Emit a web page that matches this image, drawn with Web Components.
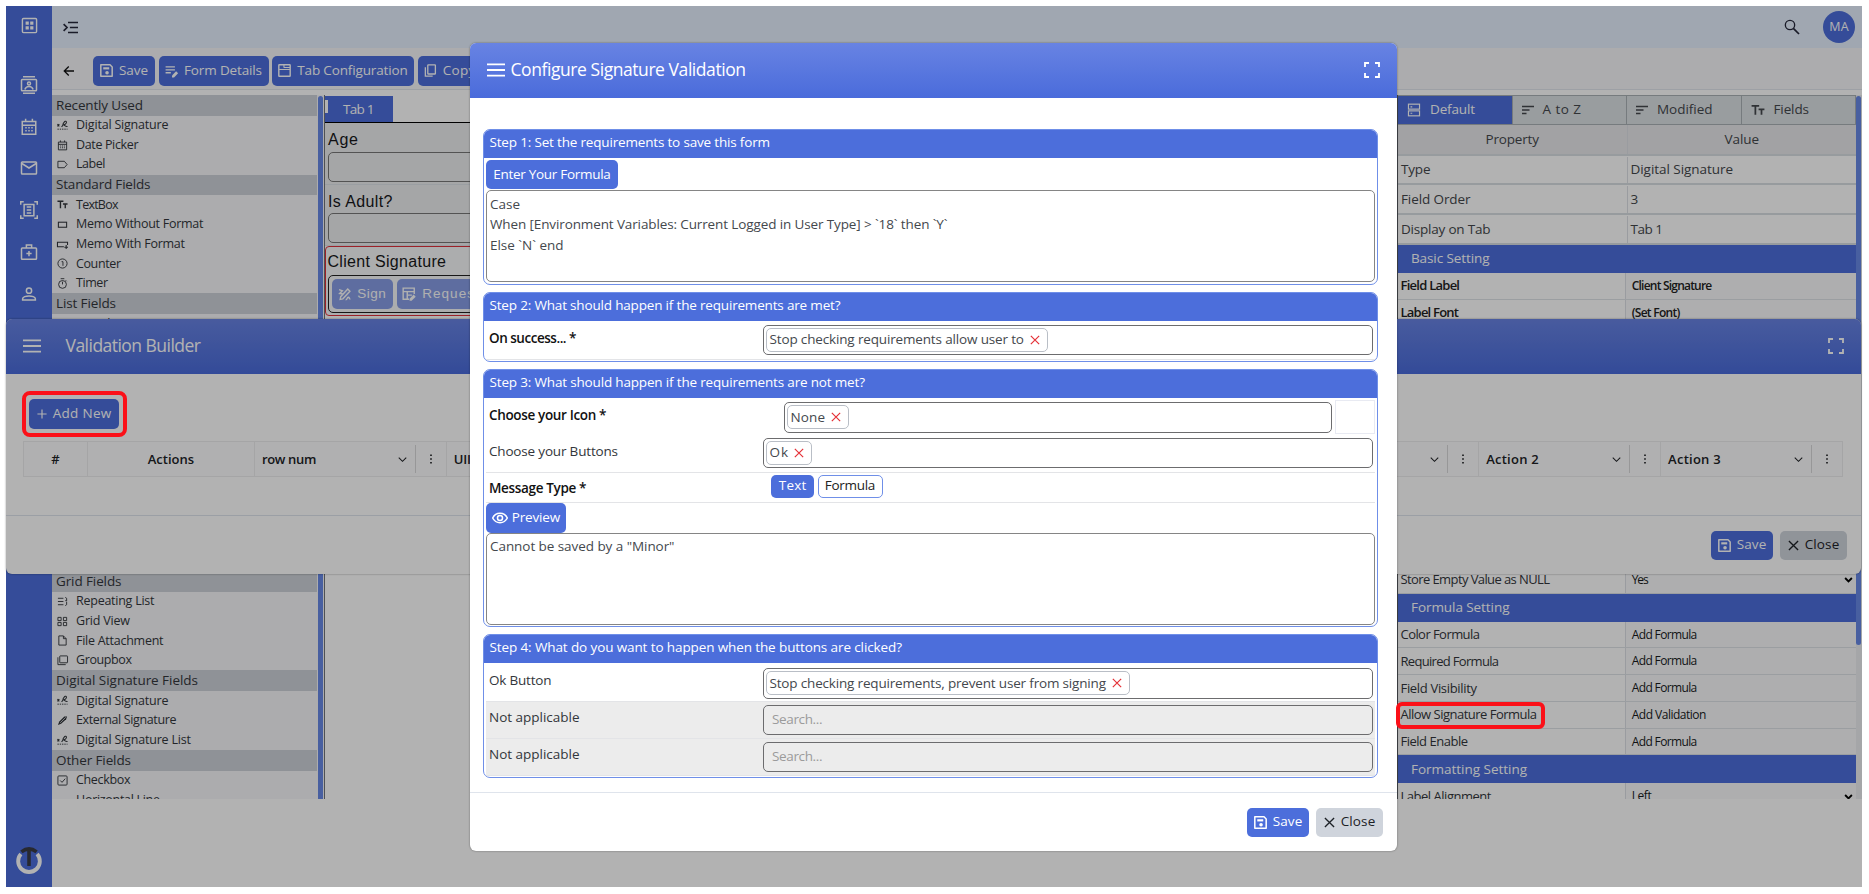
<!DOCTYPE html>
<html lang="en">
<head>
<meta charset="utf-8">
<title>Configure Signature Validation</title>
<style>
    html, body {
        margin: 0;
        height: 100%;
        overflow: hidden;
        background: #fff;
    }

    body {
        font-family: "Open Sans", "Noto Sans", sans-serif;
        font-size: 13.5px;
        line-height: 1;
        color: #33363b;
        --blue: #4c6edb;
    }

    /* dims the page and the first dialog */
    .backdrop {
        position: absolute;
        left: 6px;
        top: 6px;
        width: 1856px;
        height: 881px;
        background: rgba(0, 0, 0, .3);
    }

    #builder {
        position: absolute;
        left: 6px;
        top: 319px;
        width: 1855px;
        height: 255px;
    }

    #configure {
        position: absolute;
        left: 470px;
        top: 43px;
        width: 927px;
        height: 808px;
    }

    .ring {
        position: absolute;
        box-sizing: border-box;
        border: 4px solid #fb1018;
        border-radius: 8px;
    }
</style>
</head>
<body>
<app-shell></app-shell>
<dialog-window id="builder" gap="25">
    <fit-text slot="title" w="134">Validation Builder</fit-text>
    <builder-grid></builder-grid>
</dialog-window>
<div class="backdrop"></div>
<dialog-window id="configure" gap="6">
    <fit-text slot="title" w="234">Configure Signature Validation</fit-text>
    <signature-form></signature-form>
</dialog-window>
<div class="ring" style="left:22px;top:391px;width:105px;height:46px"></div>
<div class="ring" style="left:1396px;top:702px;width:149px;height:27px;border-radius:6px"></div>

<script>
const S = 'fill="none" stroke="currentColor" stroke-width="2"';
const icons = {
    dashboard: `<rect x="2" y="2" width="20" height="20" rx="1.500" ${S}/><path d="M6.500 6.500h4.500v4.500h-4.500zM13 6.500h4.500v4.500H13zM6.500 13h4.500v4.500h-4.500zM13 13h4.500v4.500H13z"/>`,
    contacts: `<path d="M4 0h16v2H4zM4 22h16v2H4z"/><rect x="2" y="4.500" width="20" height="15" rx="1" ${S}/><circle cx="12" cy="10" r="2" ${S}/><path d="M6.500 18c1-3 3-4 5.500-4s4.500 1 5.500 4" ${S}/>`,
    calendar: `<path d="M3 4.500h18v17H3zM3 9.500h18M7.500 1v3.500M16.500 1v3.500" ${S}/><path d="M7 12h2v2H7zM11 12h2v2h-2zM15 12h2v2h-2zM7 16h2v2H7zM11 16h2v2h-2zM15 16h2v2h-2z"/>`,
    mail: `<rect x="2" y="4" width="20" height="16" rx="1" ${S}/><path d="M2.500 6l9.500 6 9.500-6" ${S}/>`,
    scan: `<path d="M1 5V1h4M19 1h4v4M23 19v4h-4M5 23H1v-4M5.500 4.500h13v15h-13zM9 8h6M9 12h6M9 16h6" ${S}/>`,
    medical: `<rect x="2" y="6.500" width="20" height="15" rx="1" ${S}/><path d="M8.500 6.500v-4h7v4M12 10.500v7M8.500 14h7" ${S}/>`,
    person: `<circle cx="12" cy="7.500" r="3.500" ${S}/><path d="M3.500 20v-1.800c0-2.200 4.500-3.700 8.500-3.700s8.500 1.500 8.500 3.700V20z" ${S}/>`,
    logo: `<path d="M4.500 6.500a10 10 0 1 0 15 0" fill="none" stroke="#fff" stroke-width="3.600"/><path d="M5 4.500Q12-1 19 4.500M12 2v15.500" fill="none" stroke="#3a3b46" stroke-width="3.300"/>`,
    collapse: `<path d="M8 4h16M11 12h13M8 20h16M1 6.500l5.500 5.500L1 17.500" fill="none" stroke="currentColor" stroke-width="2.600"/>`,
    search: `<circle cx="9" cy="9" r="7" ${S}/><path d="M14 14l8.500 8.500" fill="none" stroke="currentColor" stroke-width="2.600"/>`,
    back: `<path d="M22 12H3M11.500 3L2.500 12l9 9" fill="none" stroke="currentColor" stroke-width="2.600"/>`,
    save: `<path d="M1.500 1.500h17l4 4v17h-21z" fill="none" stroke="currentColor" stroke-width="2.800" stroke-linejoin="round"/><path d="M6 6h11v4H6z"/><circle cx="13" cy="16" r="3.300"/>`,
    details: `<path d="M1 5h16M1 10h16M1 15h9" fill="none" stroke="currentColor" stroke-width="2.400"/><path d="M12 19.500l7-7 3.500 3.500-7 7H12z"/>`,
    tabs: `<rect x="1.500" y="1.500" width="21" height="21" rx="1" fill="none" stroke="currentColor" stroke-width="2.600"/><path d="M2 10h20M11 2v5M11 6.500h11" ${S}/>`,
    copy: `<rect x="7" y="1.500" width="14" height="17" rx="1" fill="none" stroke="currentColor" stroke-width="2.400"/><path d="M2.500 6v16.500H16" fill="none" stroke="currentColor" stroke-width="2.400"/>`,
    plus: `<path d="M12 1v22M1 12h22" fill="none" stroke="currentColor" stroke-width="2.800"/>`,
    close: `<path d="M2 2l20 20M22 2L2 22" fill="none" stroke="currentColor" stroke-width="2.900"/>`,
    eye: `<path d="M1 12c2.500-5 6.500-7 11-7s8.500 2 11 7c-2.500 5-6.500 7-11 7S3.500 17 1 12z" fill="none" stroke="currentColor" stroke-width="2.300"/><circle cx="12" cy="12" r="3.800" fill="none" stroke="currentColor" stroke-width="2.300"/>`,
    expand: `<path d="M1.500 7.500v-6h6M16.500 1.500h6v6M22.500 16.500v6h-6M7.500 22.500h-6v-6" fill="none" stroke="currentColor" stroke-width="2.800"/>`,
    menu: `<path d="M0 4.500h24M0 12h24M0 19.500h24" fill="none" stroke="currentColor" stroke-width="2.600"/>`,
    server: `<rect x="2.500" y="2" width="19" height="8.500" ${S}/><rect x="2.500" y="13.500" width="19" height="8.500" ${S}/><path d="M6 6.500h3M6 17.500h3" ${S}/>`,
    sort: `<path d="M0 5h24M0 12h15M0 19h9" fill="none" stroke="currentColor" stroke-width="2.600"/>`,
    text: `<path d="M1 5h13M7.500 5v15M13 11h10M18 11v9" fill="none" stroke="currentColor" stroke-width="3"/>`,
    sign: `<path d="M1 9l4 5M1 14l4-5M10 15c2-3 3-2 3-5s5-9 7-7-1 7-4 7 3 5 7 4" fill="none" stroke="currentColor" stroke-width="2.300"/><path d="M1 20h3M6 20h3M11 20h3M16 20h3M21 20h2" ${S}/>`,
    tag: `<path d="M2 5h14l6 7-6 7H2z" ${S}/>`,
    box: `<rect x="3" y="7" width="18" height="11" fill="none" stroke="currentColor" stroke-width="2.300"/>`,
    boxplus: `<path d="M15 17H1V7h22v6M20 13v9M16 18h8" fill="none" stroke="currentColor" stroke-width="2.300"/>`,
    one: `<circle cx="12" cy="12" r="10" ${S}/><path d="M10 8h3v9" ${S}/>`,
    timer: `<circle cx="12" cy="14" r="8.500" ${S}/><path d="M8 1.500h8M12 8v6M19 5l2 2" ${S}/>`,
    list: `<path d="M2 5h12M2 12h12M2 19h12M18 3l3 2v6l-3-1M21 13v6l-3 2" ${S}/>`,
    grid: `<path d="M2 3h7v7H2zM14 3h7v7h-7zM2 14h7v7H2zM14 14h7v7h-7z" ${S}/>`,
    file: `<path d="M4 2h10l6 6v14H4zM14 2v6h6" ${S}/>`,
    group: `<rect x="6" y="2" width="17" height="15" rx="1" ${S}/><path d="M2 5v16h17" ${S}/>`,
    pen: `<path d="M2 22l3-8L16 3h6l-2 6L9 19z"/><path d="M7 17L19 5" stroke="#f6f7fa" stroke-width="1.500"/>`,
    check: `<rect x="2" y="2" width="20" height="20" rx="2" ${S}/><path d="M7 12l4 4 7-8" ${S}/>`,
    dash: `<path d="M2 12h20" ${S}/>`,
    draw: `<path d="M2 3l6 2-5 5 6 1M4 21l1-5L18 2l4 4L9 20zM14 22c4 0 2-5 5-5s1 4 4 3" fill="none" stroke="currentColor" stroke-width="2.600"/>`,
    request: `<path d="M12 21H2V2h19v10M2 8h19M9 8v12M9 14h8" fill="none" stroke="currentColor" stroke-width="2.400"/><path d="M13 20l7-7 3.500 3.500-7 7H13z"/>`,
    chevron: `<path d="M2 7l10 10L22 7" fill="none" stroke="currentColor" stroke-width="2.800"/>`,
    select: `<path d="M3 8l9 9 9-9" fill="none" stroke="currentColor" stroke-width="5"/>`,
    dots: `<path d="M10 1h4v4h-4zM10 10h4v4h-4zM10 19h4v4h-4z"/>`
};

const icon = (name, size = 16) => `<ui-icon name="${name}" size="${size}"></ui-icon>`;
const t = (text, w) => `<fit-text w="${w}">${text}</fit-text>`;

// small helper: an element whose shadow root is filled once
function define(name, render) {
    customElements.define(name, class extends HTMLElement {
        constructor() {
            super();
            this.attachShadow({mode: 'open'});
            this.shadowRoot.innerHTML = render(this);
        }
    });
}

define('top-bar', () => `
<style>
    :host {
        display: flex;
        align-items: center;
        height: 42px;
        box-sizing: border-box;
        padding: 0 7px 0 11px;
        background: #e5effe;
        color: #26283a;
    }
    .avatar {
        width: 32px;
        height: 32px;
        border-radius: 50%;
        margin-left: 23px;
        display: flex;
        align-items: center;
        justify-content: center;
        background: var(--blue);
        color: #fff;
        font-size: 12.5px;
    }
    .search { margin-left: auto; display: flex; }
</style>
${icon('collapse', 15)}
<span class="search">${icon('search', 16)}</span>
<span class="avatar">${t('MA', 18)}</span>`);

define('side-nav', () => `
<style>
    :host {
        display: flex;
        flex-direction: column;
        align-items: center;
        width: 46px;
        background: var(--blue);
        color: #fff;
    }
    ui-icon { margin-top: 23.800px; }
    ui-icon:first-of-type { margin: 11px 0 18px; }
    ui-icon:last-of-type { margin: auto 0 14px; }
</style>
${icon('dashboard', 17)}${['contacts', 'calendar', 'mail', 'scan', 'medical', 'person'].map(n => icon(n, 18)).join('')}${icon('logo', 26)}`);

define('ui-button', el => `
<style>
    :host {
        display: flex;
        align-items: center;
        justify-content: center;
        gap: 6px;
        height: 30px;
        flex: none;
        border-radius: 5px;
        box-sizing: border-box;
        background: var(--blue);
        color: #fff;
        font-size: 13.5px;
        font-weight: ${el.hasAttribute('strong') ? 500 : 400};
    }
    :host([plain]) { background: #cfd4dc; color: #1d2126; }
</style>
${el.getAttribute('icon') ? icon(el.getAttribute('icon'), el.getAttribute('size') || 13) : ''}<slot></slot>`);

define('tool-bar', () => `
<style>
    :host {
        display: flex;
        gap: 3.500px;
        height: 42px;
        box-sizing: border-box;
        padding: 7.500px 0 0 11px;
        background: #f6f7fa;
        border-bottom: 1px solid #e1e5ec;
    }
    .back { width: 26.500px; height: 30px; display: flex; align-items: center; color: #111; }
</style>
<span class="back">${icon('back', 12)}</span>
<ui-button icon="save" style="width:62px">${t('Save', 27.5)}</ui-button>
<ui-button icon="details" size="14" style="width:110px;gap:5px">${t('Form Details', 76.5)}</ui-button>
<ui-button icon="tabs" style="width:142px">${t('Tab Configuration', 109)}</ui-button>
<ui-button icon="copy" size="13" style="width:64px">${t('Copy', 31)}</ui-button>`);

const groups = [
    ['Recently Used', 85.5, [['sign', 'Digital Signature', 91], ['calendar', 'Date Picker', 61], ['tag', 'Label', 28]]],
    ['Standard Fields', 93, [['text', 'TextBox', 41], ['box', 'Memo Without Format', 126], ['boxplus', 'Memo With Format', 107.5], ['one', 'Counter', 43.5], ['timer', 'Timer', 30.5]]],
    ['List Fields', 58.5, [['list', 'Dropdown', 56]], 237.5],
    ['Grid Fields', 64, [['list', 'Repeating List', 77], ['grid', 'Grid View', 52.5], ['file', 'File Attachment', 86], ['group', 'Groupbox', 54.5]]],
    ['Digital Signature Fields', 140.5, [['sign', 'Digital Signature', 91], ['pen', 'External Signature', 99], ['sign', 'Digital Signature List', 113.5]]],
    ['Other Fields', 73.5, [['check', 'Checkbox', 53], ['dash', 'Horizontal Line', 82.5]]]
];

define('field-list', () => `
<style>
    :host {
        display: flex;
        width: 273px;
        height: 704px;
        overflow: hidden;
        background: #f6f7fa;
        box-sizing: border-box;
        border-right: 1.500px solid #70737a;
    }
    .list { width: 265px; }
    .head {
        height: 20.600px;
        padding-left: 4px;
        display: flex;
        align-items: center;
        background: #cdd1d8;
        font-size: 13.5px;
    }
    .item {
        height: 19.670px;
        padding-left: 5px;
        display: flex;
        align-items: center;
        gap: 8px;
        font-size: 12.5px;
    }
    .bar { width: 5px; margin: 1px auto 0 auto; border-radius: 3px 3px 0 0; background: #6788e6; }
</style>
<div class="list">${groups.map(([name, w, items, rest]) => `
    <div class="head">${t(name, w)}</div>
    ${items.map(i => `<div class="item">${icon(i[0], 11)}${t(i[1], i[2])}</div>`).join('')}
    ${rest ? `<div style="height:${rest}px"></div>` : ''}`).join('')}
</div>
<div class="bar"></div>`);

define('form-canvas', () => `
<style>
    :host {
        display: block;
        flex: 1;
        font-family: "Liberation Sans", Arial, sans-serif;
        font-size: 16px;
        color: #17181a;
    }
    .tabs { height: 27px; border-bottom: 1.500px solid #000; display: flex; }
    .tab {
        width: 68px;
        height: 26px;
        margin-top: 1px;
        background: var(--blue);
        color: #fff;
        display: flex;
        align-items: center;
        font: 13.5px "Open Sans", sans-serif;
    }
    .tab i { width: 3px; height: 13px; background: #fff; align-self: flex-start; margin: 4px 15px 0 0; }
    .field { height: 61.500px; box-sizing: border-box; padding: 9px 3px 0; background: #edeef0; border-bottom: 1px solid #dde2e8; }
    .input { height: 28px; border: 1px solid #777; border-radius: 5px; margin-top: 3.500px; }
    .signed { height: 70px; box-sizing: border-box; border: 1.500px solid #e0303a; background: #f7f8f9; padding: 7px 1.500px 0; border-radius: 4px; }
    .signed .input { border-color: #222; margin-top: 5px; display: flex; gap: 4px; padding: 3px; box-sizing: border-box; height: 38px; }
    ui-button { opacity: .65; font-family: "Liberation Sans", sans-serif; }
</style>
<div class="tabs"><div class="tab"><i></i>${t('Tab 1', 30)}</div></div>
<div class="field">${t('Age', 28.5)}<div class="input"></div></div>
<div class="field">${t('Is Adult?', 63)}<div class="input"></div></div>
<div class="signed">${t('Client Signature', 117)}
    <div class="input">
        <ui-button icon="draw" style="width:61px">${t('Sign', 27)}</ui-button>
        <ui-button icon="request" size="14" style="width:88px">${t('Request', 55)}</ui-button>
    </div>
</div>`);

const formula = (name, w) => [name, w, 'Add Formula', 64];
define('property-panel', () => {
    const tall = (a, aw, b, bw) => `<div class="row tall"><span>${t(a, aw)}</span><span>${t(b, bw)}</span></div>`;
    const row = ([a, aw, b, bw], cls = '') => `<div class="row ${cls}"><span>${t(a, aw)}</span><span>${t(b, bw)}${cls.includes('pick') ? icon('select', 9) : ''}</span></div>`;
    return `
<style>
    :host {
        display: flex;
        width: 465px;
        height: 704px;
        box-sizing: border-box;
        border-left: 1.500px solid #5c6067;
        overflow: hidden;
        background: #fff;
    }
    .main { width: 458px; }
    .tabs { display: flex; height: 30px; box-sizing: border-box; border: solid #aab0b5; border-width: 1px 0; }
    .tab {
        flex: 1;
        display: flex;
        align-items: center;
        gap: 9px;
        padding-left: 9px;
        background: #dce1e4;
        border-right: 1px solid #aab0b5;
        color: #44484d;
    }
    .tab.on { background: var(--blue); color: #fff; }
    .row { display: flex; height: 26.750px; box-sizing: border-box; border-bottom: 1px solid #dfe2e7; }
    .row span { flex: 1; display: flex; align-items: center; padding-left: 2.500px; font-size: 13px; }
    .row span + span { border-left: 1px solid #dde0e5; padding-left: 6px; font-size: 12px; color: #181a1d; background: #f9fafb; }
    .tall { height: 29.800px; border-bottom: 2px solid #d9dee3; }
    .tall span, .tall span + span { padding-left: 3px; font-size: 13.5px; color: #44474b; background: none; }
    .tall:not(.title) { padding-top: 1px; }
    .title { background: #e8e9eb; height: 30.500px; }
    .title span, .title span + span { justify-content: center; padding: 0; }
    .strong span, .strong span + span { font-weight: 600; color: #222; }
    .pick ui-icon { margin: 0 3px 0 auto; color: #000; }
    .band {
        height: 28px;
        display: flex;
        align-items: center;
        padding-left: 13px;
        background: var(--blue);
        color: #fff;
        font-size: 13.5px;
        font-weight: 500;
    }
    .bar { width: 6px; background: #eceef1; }
    .bar i { display: block; height: 549px; border-radius: 3px; background: #6788e6; width: 5px; margin-top: 1px; }
</style>
<div class="main">
    <div class="tabs">
        <div class="tab on">${icon('server', 14)}${t('Default', 43.5)}</div>
        <div class="tab">${icon('sort', 12)}${t('A to Z', 37)}</div>
        <div class="tab">${icon('sort', 12)}${t('Modified', 54)}</div>
        <div class="tab">${icon('text', 14)}${t('Fields', 34)}</div>
    </div>
    <div class="row tall title"><span>${t('Property', 52)}</span><span>${t('Value', 33)}</span></div>
    ${tall('Type', 28, 'Digital Signature', 101)}
    ${tall('Field Order', 68, '3', 6)}
    ${tall('Display on Tab', 88, 'Tab 1', 31)}
    <div class="band">${t('Basic Setting', 77)}</div>
    ${row(['Field Label', 58, 'Client Signature', 79], 'strong')}
    ${row(['Label Font', 57, '(Set Font)', 47], 'strong')}
    <div style="height:240.500px"></div>
    ${row(['Store Empty Value as NULL', 148, 'Yes', 15.5], 'pick')}
    <div class="band">${t('Formula Setting', 97)}</div>
    ${row(formula('Color Formula', 78))}
    ${row(formula('Required Formula', 97))}
    ${row(formula('Field Visibility', 75))}
    ${row(['Allow Signature Formula', 135, 'Add Validation', 73])}
    ${row(formula('Field Enable', 66))}
    <div class="band">${t('Formatting Setting', 114.5)}</div>
    ${row(['Label Alignment', 89.5, 'Left', 18.5], 'pick')}
</div>
<div class="bar"><i></i></div>`;
});

define('app-shell', () => `
<style>
    :host {
        display: flex;
        width: 1856px;
        height: 881px;
        margin: 6px;
        overflow: hidden;
        background: #fff;
    }
    .page { flex: 1; }
    .work { display: flex; padding-top: 5px; height: 704px; }
</style>
<side-nav></side-nav>
<div class="page">
    <top-bar></top-bar>
    <tool-bar></tool-bar>
    <div class="work"><field-list></field-list><form-canvas></form-canvas><property-panel></property-panel></div>
</div>`);

define('dialog-window', el => `
<style>
    :host {
        display: flex;
        flex-direction: column;
        box-sizing: border-box;
        background: #fff;
        border-radius: 6px;
        overflow: hidden;
        box-shadow: 0 0 2px rgba(0, 0, 0, .45);
    }
    header {
        flex: none;
        height: 55px;
        display: flex;
        align-items: center;
        gap: ${el.getAttribute('gap')}px;
        padding: 0 17px 1px 16.500px;
        box-sizing: border-box;
        background: linear-gradient(#6883e3, #5675de 60%, #4a6bdb);
        color: #fff;
        font-size: 17.5px;
    }
    header .full { margin-left: auto; display: flex; }
    main { flex: 1; min-height: 0; }
    footer {
        flex: none;
        height: 59px;
        box-sizing: border-box;
        border-top: 1px solid #dfe4ec;
        padding: 14.500px 14px;
        display: flex;
        justify-content: flex-end;
        gap: 7px;
    }
    ui-button { height: 29px; }
</style>
<header>${icon('menu', 18)}<slot name="title"></slot><span class="full">${icon('expand', 16)}</span></header>
<main><slot></slot></main>
<footer>
    <ui-button icon="save" strong style="width:62px">${t('Save', 28)}</ui-button>
    <ui-button icon="close" plain size="11" style="width:67px">${t('Close', 33)}</ui-button>
</footer>`);

define('grid-column', el => `
<style>
    :host {
        display: flex;
        align-items: center;
        box-sizing: border-box;
        padding-left: 7px;
        border-right: 1px solid #ececee;
        font-weight: 600;
        font-size: 13px;
        color: #202226;
    }
    .menu { margin-left: auto; display: flex; align-items: center; }
    .menu ui-icon { margin-right: 8px; }
    .menu span { height: 28px; border-left: 1px solid #d8d8da; padding-left: 10px; display: flex; align-items: center; }
    .menu span ui-icon { margin-right: 10px; }
    :host([center]) { justify-content: center; padding: 0; }
</style>
<slot></slot>
${el.hasAttribute('center') ? '' : `<div class="menu">${icon('chevron', 9)}<span>${icon('dots', 10)}</span></div>`}`);

define('builder-grid', () => `
<style>
    :host { display: block; padding: 25px 18px 0 17px; }
    ui-button { width: 90px; margin-left: 6px; }
    .head { display: flex; height: 36px; box-sizing: border-box; margin-top: 12px; border: 1px solid #ececee; border-right: 0; background: #fdfdfe; }
</style>
<ui-button icon="plus" size="10">${t('Add New', 57)}</ui-button>
<div class="head">
    <grid-column center style="width:64px">${t('#', 7)}</grid-column>
    <grid-column center style="width:167px">${t('Actions', 45)}</grid-column>
    <grid-column style="width:192px">${t('row num', 53)}</grid-column>
    <grid-column style="width:851px">${t('UIID', 25)}</grid-column>
    <grid-column style="width:182px">${t('Action 1', 51)}</grid-column>
    <grid-column style="width:182px">${t('Action 2', 51)}</grid-column>
    <grid-column style="width:182px">${t('Action 3', 51)}</grid-column>
</div>`);

define('step-card', () => `
<style>
    :host {
        display: block;
        box-sizing: border-box;
        border: 1px solid #6f8fe8;
        border-radius: 7px;
        overflow: hidden;
    }
    header {
        height: 28px;
        box-sizing: border-box;
        display: flex;
        align-items: center;
        padding: 0 0 2px 5.500px;
        background: var(--blue);
        color: #fff;
        font-size: 13.5px;
        font-weight: 500;
    }
    section { padding: 2px 2px 0; }
</style>
<header><slot name="title"></slot></header>
<section><slot></slot></section>`);

define('tag-select', el => `
<style>
    :host {
        display: flex;
        align-items: center;
        box-sizing: border-box;
        height: 30.500px;
        border: 1.500px solid #6c6c6e;
        border-radius: 5px;
        padding: 0 1.500px;
        flex: none;
    }
    .tag {
        display: flex;
        align-items: center;
        gap: 6px;
        height: 24px;
        box-sizing: border-box;
        padding: 0 7px 0 3px;
        border: 1px solid #b9bec6;
        border-radius: 5px;
        color: #44484d;
    }
    .tag ui-icon { color: #e5343a; }
    .hint { color: #9b9b9b; padding-left: 6.500px; }
</style>
${el.hasAttribute('empty') ? '<span class="hint"><slot></slot></span>' : `<span class="tag"><slot></slot>${icon('close', 10)}</span>`}`);

define('signature-form', () => `
<style>
    :host { display: flex; flex-direction: column; gap: 7px; padding: 31px 19px 0 13px; }
    .area {
        height: 92px;
        box-sizing: border-box;
        border: 1px solid #858585;
        border-radius: 5px;
        padding: 2.500px 3px;
        color: #44484d;
    }
    .area fit-text { display: block; line-height: 20.700px; }
    .row { display: flex; align-items: flex-start; box-sizing: border-box; padding: 0 2px 0 3px; border-bottom: 1.500px solid #e3e4e7; }
    .name { width: 274px; flex: none; padding-top: 7px; height: 14px; }
    .last .name { padding-top: 6px; }
    .req { font-weight: 600; color: #111; }
    .off { background: #ececec; }
    .square { width: 40px; height: 34px; box-sizing: border-box; border: 1px solid #e8eaf2; margin: -2px 0 0 3px; }
    tag-select { width: 610px; }
    .text { width: 43px; height: 23px; }
    .formula { width: 65px; height: 23px; background: #fff; color: #222; border: 1px solid #6f8fe8; margin-left: 3.500px; }
</style>
<step-card style="height:156px">
    <fit-text slot="title" w="279">Step 1: Set the requirements to save this form</fit-text>
    <ui-button strong style="width:132px;height:29px;margin-bottom:1px">${t('Enter Your Formula', 116)}</ui-button>
    <div class="area">
        ${t('Case', 28.5)}${t('When [Environment Variables: Current Logged in User Type] &gt; `18` then `Y`', 456)}${t('Else `N` end', 72)}
    </div>
</step-card>
<step-card style="height:70px">
    <fit-text slot="title" w="349.5">Step 2: What should happen if the requirements are met?</fit-text>
    <div class="row" style="height:36.500px;padding-top:1.500px">
        <span class="name req">${t('On success... *', 86)}</span>
        <tag-select>${t('Stop checking requirements allow user to', 253)}</tag-select>
    </div>
</step-card>
<step-card style="height:258px">
    <fit-text slot="title" w="374">Step 3: What should happen if the requirements are not met?</fit-text>
    <div class="row" style="height:36px;padding:2px 0 0 3px;border:0">
        <span class="name req" style="width:295px">${t('Choose your Icon *', 116)}</span>
        <tag-select style="width:548px">${t('None', 33)}</tag-select>
        <span class="square"></span>
    </div>
    <div class="row" style="height:36.500px;padding-top:1.500px">
        <span class="name">${t('Choose your Buttons', 127.5)}</span>
        <tag-select>${t('Ok', 17)}</tag-select>
    </div>
    <div class="row" style="height:30.500px;padding-top:2px">
        <span class="name req" style="width:282px">${t('Message Type *', 96)}</span>
        <ui-button class="text" strong>${t('Text', 26)}</ui-button>
        <ui-button class="formula">${t('Formula', 49)}</ui-button>
    </div>
    <ui-button icon="eye" size="16" strong style="width:80px;gap:4px">${t('Preview', 47)}</ui-button>
    <div class="area" style="padding-top:1.500px">${t('Cannot be saved by a "Minor"', 183)}</div>
</step-card>
<step-card class="last" style="height:144px">
    <fit-text slot="title" w="411">Step 4: What do you want to happen when the buttons are clicked?</fit-text>
    <div class="row" style="height:37px;padding-top:3px">
        <span class="name">${t('Ok Button', 61)}</span>
        <tag-select>${t('Stop checking requirements, prevent user from signing', 335)}</tag-select>
    </div>
    <div class="row off" style="height:37px;padding-top:2.500px">
        <span class="name">${t('Not applicable', 89)}</span>
        <tag-select empty>${t('Search...', 49)}</tag-select>
    </div>
    <div class="row off" style="height:37px;padding-top:2.500px">
        <span class="name">${t('Not applicable', 89)}</span>
        <tag-select empty>${t('Search...', 49)}</tag-select>
    </div>
</step-card>`);

class UiIcon extends HTMLElement {
    constructor() {
        super();
        this.attachShadow({mode: 'open'});
        const size = this.getAttribute('size');
        this.shadowRoot.innerHTML = `
<style>
    :host { display: block; flex: none; }
    svg { display: block; fill: currentColor; overflow: visible; }
</style>
<svg width="${size}" height="${size}" viewBox="0 0 24 24">${icons[this.getAttribute('name')]}</svg>`;
    }
}

// one line of text, tracked so that it fills the width in its w attribute
class FitText extends HTMLElement {
    constructor() {
        super();
        this.attachShadow({mode: 'open'});
        this.shadowRoot.innerHTML = `
<style>
    :host { display: block; flex: none; white-space: nowrap; }
    span { display: inline-block; }
</style>
<span><slot></slot></span>`;
    }

    connectedCallback() {
        const span = this.shadowRoot.querySelector('span');
        span.style.letterSpacing = '0';
        const count = this.textContent.length;
        if (count < 2) return;
        const space = (Number(this.getAttribute('w')) + 1.5 - span.getBoundingClientRect().width) / (count - 1);
        span.style.letterSpacing = space.toFixed(3) + 'px';
        span.style.marginRight = (-space).toFixed(3) + 'px';
    }
}

customElements.define('ui-icon', UiIcon);
customElements.define('fit-text', FitText);
</script>
</body>
</html>
